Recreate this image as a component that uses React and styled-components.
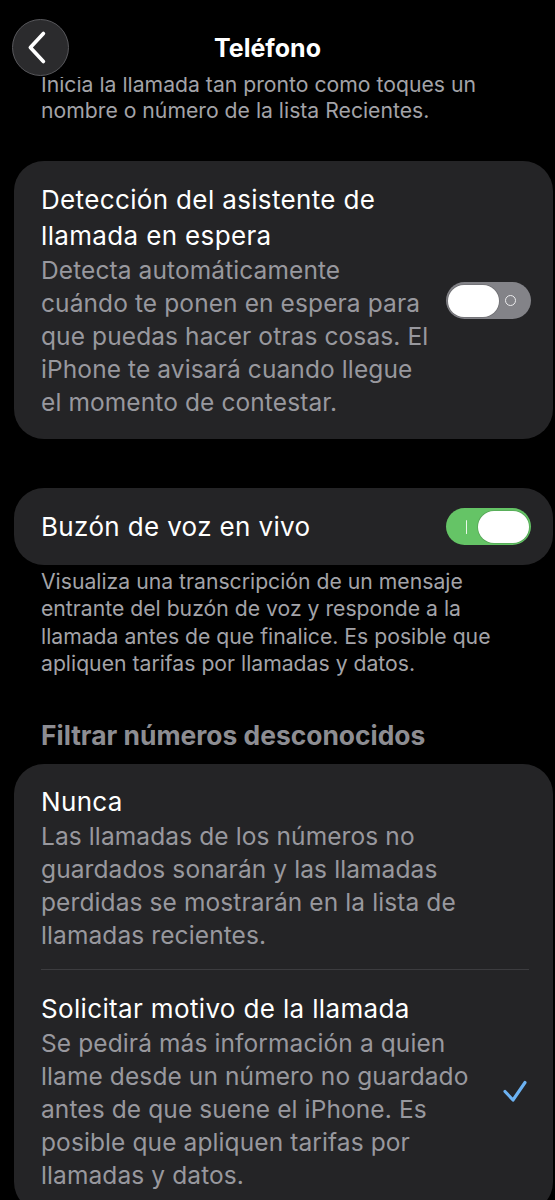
import React from "react";
import styled, { createGlobalStyle } from "styled-components";

const Global = createGlobalStyle`
  html, body { margin: 0; padding: 0; background: #000; }
  body { font-family: Inter, "Noto Sans", sans-serif; color: #fff; -webkit-font-smoothing: antialiased; }
`;

const Page = styled.div`
  position: relative;
  width: 555px;
  height: 1200px;
  overflow: hidden;
  background: #000;
`;

const Nav = styled.header`
  position: absolute;
  top: 0;
  left: 0;
  right: 0;
  height: 77px;
  box-sizing: border-box;
  padding: 18.5px 32px 0 12px;
  background: #000;
  z-index: 2;
  display: grid;
  grid-template-columns: 57px 1fr 57px;
  align-items: start;
`;

const BackButton = styled.button`
  width: 57px;
  height: 57px;
  box-sizing: border-box;
  border-radius: 50%;
  background: #2b2b2d;
  border: 1.5px solid #58585c;
  padding: 0;
  display: flex;
  align-items: center;
  justify-content: center;
`;

const Title = styled.h1`
  margin: 0;
  padding-top: 14.5px;
  text-align: center;
  font-size: 25px;
  line-height: 30px;
  font-weight: 700;
  color: #fff;
`;

const Content = styled.main`
  display: flex;
  flex-direction: column;
  padding: 71px 2px 0 14px;
`;

const Footnote = styled.p`
  margin: ${(p) => p.$mt || 0}px 0 0 0;
  padding-left: 27px;
  font-size: 21.2px;
  line-height: ${(p) => p.$lh || 27.3}px;
  white-space: pre;
  color: #a3a3a8;
`;

const Card = styled.section`
  margin-top: ${(p) => p.$mt || 0}px;
  padding-left: 27px;
  background: #242426;
  border-radius: 30px;
`;

const Row = styled.div`
  display: flex;
  align-items: center;
  gap: 8px;
  padding: ${(p) => p.$pad};
`;

const RowText = styled.div`
  flex: 1;
  min-width: 0;
`;

const RowTitle = styled.div`
  font-size: 26px;
  line-height: 36px;
  letter-spacing: 0.35px;
  white-space: pre;
  color: #fff;
`;

const RowDesc = styled.div`
  font-size: 24.5px;
  line-height: 33px;
  letter-spacing: 0.1px;
  white-space: pre;
  color: #98989e;
`;

const Separator = styled.div`
  height: 1px;
  margin-right: 24px;
  background: #3c3c3f;
`;

const SectionHeader = styled.h2`
  margin: 41px 0 0 0;
  padding-left: 27px;
  font-size: 26.4px;
  line-height: 34px;
  font-weight: 700;
  color: #8d8d92;
`;

const Track = styled.div`
  position: relative;
  flex: none;
  width: 85px;
  height: 37px;
  border-radius: 18.5px;
  background: ${(p) => (p.$on ? "#65c466" : "#838388")};
`;

const Knob = styled.div`
  position: absolute;
  top: 2.5px;
  left: ${(p) => (p.$on ? "32px" : "2px")};
  width: 51px;
  height: 32px;
  border-radius: 16px;
  background: #fff;
  box-shadow: 0 0 0 0.8px rgba(0, 0, 0, 0.15);
`;

const OffMark = styled.div`
  position: absolute;
  left: 59px;
  top: 13px;
  width: 11px;
  height: 11px;
  box-sizing: border-box;
  border-radius: 50%;
  border: 1.7px solid #ececee;
`;

const OnMark = styled.div`
  position: absolute;
  left: 19.5px;
  top: 12px;
  width: 1.6px;
  height: 14px;
  border-radius: 1px;
  background: #eaf8ea;
`;

const Toggle = ({ on }) => (
  <Track $on={on}>
    {on ? <OnMark /> : <OffMark />}
    <Knob $on={on} />
  </Track>
);

const Check = styled.svg`
  flex: none;
  width: 24px;
  height: 22px;
`;

export default function App() {
  return (
    <Page>
      <Global />
      <Nav>
        <BackButton aria-label="Atrás">
          <svg width="57" height="57" viewBox="0 0 57 57">
            <path
              d="M31.5 14 L18 28.5 L31.5 43"
              fill="none"
              stroke="#fff"
              strokeWidth="3.8"
              strokeLinecap="round"
              strokeLinejoin="round"
            />
          </svg>
        </BackButton>
        <Title>Teléfono</Title>
      </Nav>
      <Content>
        <Footnote $lh={26}>
          {"Inicia la llamada tan pronto como toques un\nnombre o número de la lista Recientes."}
        </Footnote>
        <Card $mt={38}>
          <Row $pad="21px 22px 20px 0">
            <RowText>
              <RowTitle>{"Detección del asistente de\nllamada en espera"}</RowTitle>
              <RowDesc>
                {"Detecta automáticamente\ncuándo te ponen en espera para\nque puedas hacer otras cosas. El\niPhone te avisará cuando llegue\nel momento de contestar."}
              </RowDesc>
            </RowText>
            <Toggle on={false} />
          </Row>
        </Card>
        <Card $mt={49}>
          <Row $pad="20px 22px 20px 0">
            <RowText>
              <RowTitle>Buzón de voz en vivo</RowTitle>
            </RowText>
            <Toggle on />
          </Row>
        </Card>
        <Footnote $mt={3}>
          {"Visualiza una transcripción de un mensaje\nentrante del buzón de voz y responde a la\nllamada antes de que finalice. Es posible que\napliquen tarifas por llamadas y datos."}
        </Footnote>
        <SectionHeader>Filtrar números desconocidos</SectionHeader>
        <Card $mt={12}>
          <Row $pad="20px 24px 17px 0">
            <RowText>
              <RowTitle>Nunca</RowTitle>
              <RowDesc>
                {"Las llamadas de los números no\nguardados sonarán y las llamadas\nperdidas se mostrarán en la lista de\nllamadas recientes."}
              </RowDesc>
            </RowText>
          </Row>
          <Separator />
          <Row $pad="20.5px 26px 20px 0">
            <RowText>
              <RowTitle>Solicitar motivo de la llamada</RowTitle>
              <RowDesc>
                {"Se pedirá más información a quien\nllame desde un número no guardado\nantes de que suene el iPhone. Es\nposible que apliquen tarifas por\nllamadas y datos."}
              </RowDesc>
            </RowText>
            <Check viewBox="0 0 24 22">
              <path
                d="M2 11.5 L10 20 L22 2.5"
                fill="none"
                stroke="#6cb2f2"
                strokeWidth="3.1"
                strokeLinecap="round"
                strokeLinejoin="round"
              />
            </Check>
          </Row>
        </Card>
      </Content>
    </Page>
  );
}
